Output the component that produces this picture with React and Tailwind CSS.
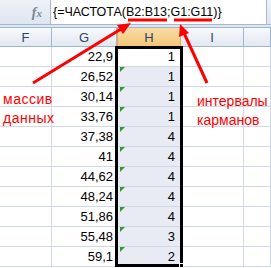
import React from "react";

const gValues = ["22,9", "26,52", "30,14", "33,76", "37,38", "41", "44,62", "48,24", "51,86", "55,48", "59,1"];
const hValues = ["1", "1", "1", "1", "4", "4", "4", "4", "4", "3", "2"];

function HeaderRow() {
  const cell = "flex items-center justify-center border-r border-[#9eb6ce] text-[13px] text-[#2b4566]";
  return (
    <div className="grid grid-cols-[52px_65px_64px_63px_27px] h-[20px] border-t border-b border-[#9eb6ce] bg-gradient-to-b from-[#f7f9fc] to-[#e2e8f1]">
      <div className={cell}>F</div>
      <div className={cell}>G</div>
      <div className="flex items-center justify-center border-r border-l border-[#f2a44a] bg-gradient-to-b from-[#f9dca6] to-[#f2c470] text-[13px] text-[#2b4566]">H</div>
      <div className={cell}>I</div>
      <div className={cell}></div>
    </div>
  );
}

function DataRow({ g, h, first }) {
  const cell = "border-r border-b border-[#d0d7e5] h-[20px] leading-[19px] text-right text-[13px] text-black";
  return (
    <div className="grid grid-cols-[52px_65px_64px_63px_27px]">
      <div className={cell}></div>
      <div className={cell + " pr-[3px]"}>{g}</div>
      <div className={cell + " relative pr-[5px] " + (first ? "bg-white" : "bg-[#e8ebf4]")}>
        {!first && (
          <span className="absolute left-[3px] top-0 w-0 h-0 border-t-[5px] border-r-[5px] border-t-[#2e9b2e] border-r-transparent" />
        )}
        {h}
      </div>
      <div className={cell}></div>
      <div className={cell}></div>
    </div>
  );
}

export default function App() {
  return (
    <div className="relative w-[271px] h-[268px] overflow-hidden bg-white font-['Liberation_Sans',Arial,sans-serif]">
      {/* formula bar */}
      <div className="flex h-[25px] border-b border-[#a9b8cc] bg-gradient-to-b from-[#eef2f8] to-[#dfe6f0]">
        <div className="w-[50px] flex items-center justify-end pr-[8px]">
          <span className="font-['Liberation_Serif',serif] italic font-bold text-[14px] text-[#7a8594]">
            f<span className="text-[11px]">x</span>
          </span>
        </div>
        <div className="flex-1 mr-[4px] bg-white border-l border-r border-[#a9b8cc] flex items-center pl-[2px] text-[12.5px] text-black whitespace-nowrap">
          {"{=ЧАСТОТА(B2:B13;G1:G11)}"}
        </div>
      </div>
      <div className="h-[2px] bg-[#dde6f0]" />
      <HeaderRow />
      {gValues.map((g, i) => (
        <DataRow key={i} g={g} h={hValues[i]} first={i === 0} />
      ))}

      {/* selection of H */}
      <div className="absolute left-[115px] top-[46px] w-[68px] h-[221px] border-[3px] border-black" />
      <div className="absolute left-[179px] top-[263px] w-[5px] h-[5px] bg-black border border-white" />

      {/* annotations */}
      <svg className="absolute left-0 top-0" width="271" height="268" viewBox="0 0 271 268">
        <line x1="128" y1="20" x2="167" y2="20" stroke="#ff0000" strokeWidth="3" />
        <line x1="174" y1="20" x2="212" y2="20" stroke="#ff0000" strokeWidth="3" />
        <line x1="33" y1="83" x2="121" y2="29" stroke="#ff0000" strokeWidth="3" />
        <polygon points="131,23 117,25 123,34" fill="#ff0000" />
        <line x1="207" y1="83" x2="184" y2="33" stroke="#ff0000" strokeWidth="3" />
        <polygon points="180,24 179,37 189,33" fill="#ff0000" />
      </svg>
      <div className="absolute left-[3px] top-[90px] text-[14px] leading-[19px] tracking-[0.5px] text-[#ff0000]">
        <div>массив</div>
        <div>данных</div>
      </div>
      <div className="absolute left-[197px] top-[92px] text-[14px] leading-[19px] text-[#ff0000]">
        <div>интервалы</div>
        <div>карманов</div>
      </div>
    </div>
  );
}
